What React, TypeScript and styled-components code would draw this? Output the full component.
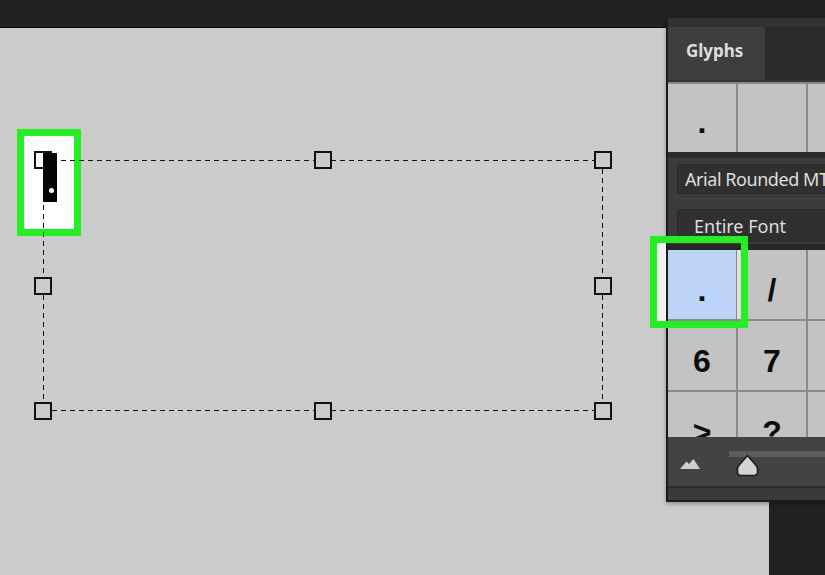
import React from 'react';
import styled, { createGlobalStyle } from 'styled-components';

const GlobalStyle = createGlobalStyle`
  html, body { margin: 0; padding: 0; background: #222; }
  body { font-family: "Noto Sans", "DejaVu Sans", sans-serif; }
  * { box-sizing: border-box; }
`;

const Screen = styled.div`
  position: relative;
  width: 825px;
  height: 575px;
  overflow: hidden;
  display: grid;
  grid-template-rows: 28px 1fr;
  background: #222;
`;

const TopBar = styled.header`
  background: #222222;
  border-bottom: 1px solid #0e0e0e;
`;

const Workspace = styled.div`
  display: flex;
  min-height: 0;
`;

const Canvas = styled.main`
  position: relative;
  flex: 1;
  background: #cbcbcb;
`;

const Dock = styled.aside`
  width: 56px;
  background: #222222;
`;

const Highlight = styled.div<{ $left: number; $top: number; $w: number; $h: number; $fill?: boolean }>`
  position: absolute;
  left: ${p => p.$left}px;
  top: ${p => p.$top}px;
  width: ${p => p.$w}px;
  height: ${p => p.$h}px;
  border: 7px solid #25ee25;
  background: ${p => (p.$fill ? '#ffffff' : 'transparent')};
  z-index: ${p => (p.$fill ? 0 : 3)};
  ${p =>
    p.$fill
      ? ''
      : `
    &::before {
      content: '';
      position: absolute;
      left: 0; top: 0; bottom: 0;
      width: 9px;
      background: #f2f2f2;
    }
    &::after {
      content: '';
      position: absolute;
      right: 0; top: 7px; bottom: 2px;
      width: 4px;
      background: #e2e2e2;
    }
  `}
`;

const Selection = styled.div`
  position: absolute;
  left: 43px;
  top: 132px;
  width: 560px;
  height: 251px;
  background:
    linear-gradient(90deg, #111 5px, transparent 5px) 0 0 / 9px 1px repeat-x,
    linear-gradient(90deg, #111 5px, transparent 5px) 0 100% / 9px 1px repeat-x,
    linear-gradient(180deg, #111 5px, transparent 5px) 0 0 / 1px 9px repeat-y,
    linear-gradient(180deg, #111 5px, transparent 5px) 100% 0 / 1px 9px repeat-y;
`;

const Handle = styled.span<{ $x: number; $y: number; $bg: string }>`
  position: absolute;
  left: ${p => p.$x}%;
  top: ${p => p.$y}%;
  width: 18px;
  height: 18px;
  transform: translate(-50%, -50%);
  border: 2px solid #111;
  background: ${p => p.$bg};
`;

const Caret = styled.div`
  position: absolute;
  z-index: 1;
  left: 43px;
  top: 125px;
  width: 14px;
  height: 49px;
  background: #050505;
`;

const CaretDot = styled.span`
  position: absolute;
  left: 6px;
  top: 35px;
  width: 5px;
  height: 5px;
  border-radius: 50%;
  background: #fff;
`;

const Panel = styled.section`
  position: absolute;
  left: 666px;
  top: 18px;
  width: 320px;
  height: 484px;
  z-index: 2;
  display: flex;
  flex-direction: column;
  background: #3b3b3b;
  border-left: 2px solid #1c1c1c;
  border-bottom: 2px solid #1c1c1c;
  box-shadow: 0 2px 4px rgba(0, 0, 0, 0.3);
  overflow: hidden;
`;

const TabBar = styled.div`
  height: 62px;
  padding-top: 9px;
  display: flex;
  background: #313131;
`;

const Tab = styled.div`
  width: 97px;
  background: #3e3e3e;
  color: #dddddd;
  font-weight: 700;
  font-size: 17px;
  line-height: 23px;
  padding: 12px 0 0 18px;
`;

const TabFiller = styled.div`
  flex: 1;
  background: #2a2a2a;
`;

const RecentRow = styled.div`
  padding-top: 4px;
  background: #333333;
  display: grid;
  grid-template-columns: repeat(4, 68px);
  grid-template-rows: 68px;
  column-gap: 2px;
`;

const GlyphCell = styled.div<{ $selected?: boolean; $pad: number }>`
  display: flex;
  justify-content: center;
  align-items: flex-end;
  padding-bottom: ${p => p.$pad}px;
  background: ${p => (p.$selected ? '#bdd3f7' : '#c3c3c3')};
  color: #0d0d0d;
  font-family: "Liberation Sans", Arial, sans-serif;
  font-weight: 700;
  font-size: 32px;
  line-height: 32px;
`;

const RecentCell = styled(GlyphCell)`
  outline: 2px solid #8a8a8a;
`;

const Divider = styled.div<{ $h: number; $c: string }>`
  height: ${p => p.$h}px;
  flex-shrink: 0;
  background: ${p => p.$c};
`;

const Controls = styled.div`
  display: flex;
  flex-direction: column;
  gap: 15px;
  padding: 6px 0 2px 9px;
  background: #3c3c3c;
`;

const Dropdown = styled.div<{ $h: number; $indent: number; $padTop: number; $tight?: boolean }>`
  height: ${p => p.$h}px;
  padding: ${p => p.$padTop}px 0 0 ${p => p.$indent}px;
  background: #303030;
  border: 1px solid #2a2a2a;
  border-right: none;
  border-radius: 3px 0 0 3px;
  color: #dedede;
  font-size: 18px;
  line-height: 24px;
  letter-spacing: ${p => (p.$tight ? '-0.45px' : '0')};
  white-space: nowrap;
`;

const GlyphGrid = styled.div`
  height: 187px;
  flex-shrink: 0;
  overflow: hidden;
  display: grid;
  grid-template-columns: repeat(8, 68px);
  grid-auto-rows: 69px;
  gap: 2px;
  background: #8a8a8a;
`;

const BottomBar = styled.div`
  height: 49px;
  flex-shrink: 0;
  display: flex;
  align-items: flex-start;
  gap: 29px;
  padding-left: 12px;
  background: #434343;
`;

const IconBox = styled.div`
  margin-top: 21px;
  width: 20px;
  height: 11px;
  display: flex;
`;

const Slider = styled.div`
  position: relative;
  flex: 1;
  height: 45px;
`;

const Track = styled.div`
  position: absolute;
  left: 0;
  right: 0;
  top: 14px;
  height: 6px;
  background: #5d5d5d;
`;

const Thumb = styled.div`
  position: absolute;
  left: 7px;
  top: 17px;
  width: 23px;
  height: 23px;
  display: flex;
`;

const recent = ['.', '', '', ''];
const glyphs = [
  '.', '/', '0', '1', '2', '3', '4', '5',
  '6', '7', '8', '9', ':', ';', '<', '=',
  '>', '?', '@', 'A', 'B', 'C', 'D', 'E',
];

const handles: [number, number][] = [
  [0, 0], [50, 0], [100, 0],
  [0, 50], [100, 50],
  [0, 100], [50, 100], [100, 100],
];

export default function App() {
  return (
    <>
      <GlobalStyle />
      <Screen>
        <TopBar />
        <Workspace>
          <Canvas>
            <Highlight $left={17} $top={101} $w={64} $h={107} $fill />
            <Selection>
              {handles.map(([x, y]) => (
                <Handle
                  key={`${x}-${y}`}
                  $x={x}
                  $y={y}
                  $bg={x === 0 && y === 0 ? '#ffffff' : '#cbcbcb'}
                />
              ))}
            </Selection>
            <Caret>
              <CaretDot />
            </Caret>
            <Highlight $left={650} $top={208} $w={98} $h={92} />
          </Canvas>
          <Dock />
        </Workspace>

        <Panel>
          <TabBar>
            <Tab>Glyphs</Tab>
            <TabFiller />
          </TabBar>
          <RecentRow>
            {recent.map((g, i) => (
              <RecentCell key={i} $pad={14}>{g}</RecentCell>
            ))}
          </RecentRow>
          <Divider $h={6} $c="#2a2a2a" />
          <Controls>
            <Dropdown $h={30} $indent={7} $padTop={2} $tight>Arial Rounded MT Bold</Dropdown>
            <Dropdown $h={33} $indent={16} $padTop={4}>Entire Font</Dropdown>
          </Controls>
          <Divider $h={6} $c="#272727" />
          <GlyphGrid>
            {glyphs.map((g, i) => (
              <GlyphCell key={i} $pad={13} $selected={i === 0}>{g}</GlyphCell>
            ))}
          </GlyphGrid>
          <BottomBar>
            <IconBox>
              <svg width="20" height="11" viewBox="0 0 20 11">
                <path d="M0 11 L6.5 3.5 L9 6 L13.5 1 L20 11 Z" fill="#cfcfcf" />
              </svg>
            </IconBox>
            <Slider>
              <Track />
              <Thumb>
                <svg width="23" height="23" viewBox="0 0 23 23">
                  <path
                    d="M11.5 1.5 L20.2 11.5 Q21.5 13 21.5 15 L21.5 18 Q21.5 21.5 18 21.5 L5 21.5 Q1.5 21.5 1.5 18 L1.5 15 Q1.5 13 2.8 11.5 Z"
                    fill="#d3d3d3"
                    stroke="#1c1c1c"
                    strokeWidth="1.6"
                    strokeLinejoin="round"
                  />
                </svg>
              </Thumb>
            </Slider>
          </BottomBar>
          <Divider $h={2} $c="#2b2b2b" />
          <Divider $h={12} $c="#3a3a3a" />
        </Panel>
      </Screen>
    </>
  );
}
